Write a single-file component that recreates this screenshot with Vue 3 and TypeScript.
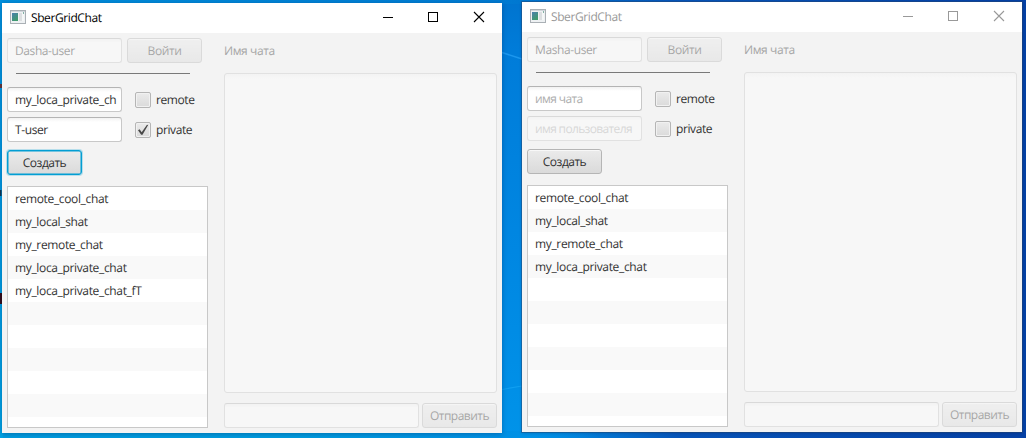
<script setup lang="ts">
interface ChatWindow {
  id: string
  active: boolean
  user: string
  chatName: string
  chatUser: string
  remote: boolean
  isPrivate: boolean
  chats: string[]
}

const windows: ChatWindow[] = [
  {
    id: 'dasha',
    active: true,
    user: 'Dasha-user',
    chatName: 'my_loca_private_ch',
    chatUser: 'T-user',
    remote: false,
    isPrivate: true,
    chats: ['remote_cool_chat', 'my_local_shat', 'my_remote_chat', 'my_loca_private_chat', 'my_loca_private_chat_fT'],
  },
  {
    id: 'masha',
    active: false,
    user: 'Masha-user',
    chatName: '',
    chatUser: '',
    remote: false,
    isPrivate: false,
    chats: ['remote_cool_chat', 'my_local_shat', 'my_remote_chat', 'my_loca_private_chat'],
  },
]

const rowCount = 11
</script>

<template>
  <main class="desktop">
    <svg class="wallpaper" width="1026" height="438" viewBox="0 0 1026 438">
      <path d="M502 52.500L522 59" stroke="#1c97ee" stroke-width="1.500" />
      <path d="M502 389.500L522 386" stroke="#109ff0" stroke-width="1.200" />
      <rect x="0" y="84" width="2" height="4" fill="#653638" />
      <rect x="0" y="190" width="1.500" height="6" fill="#12344c" />
      <rect x="0" y="293" width="2" height="11" fill="#350c18" />
    </svg>
    <section v-for="w in windows" :key="w.id" class="window" :class="{ inactive: !w.active }">
      <header class="titlebar">
        <svg class="app-icon" width="16" height="14" viewBox="0 0 16 14">
          <defs>
            <linearGradient :id="'pane-' + w.id" x1="0" y1="0" x2="0.600" y2="1">
              <stop offset="0" stop-color="#4a7fae" />
              <stop offset="1" stop-color="#3f9b6c" />
            </linearGradient>
          </defs>
          <rect x="0.500" y="0.500" width="15" height="13" fill="#eef1f3" stroke="#aab0b5" />
          <rect x="1" y="1" width="14" height="1" fill="#cfd5da" />
          <rect x="2" y="3" width="6" height="8" :fill="`url(#pane-${w.id})`" />
          <rect x="9" y="3" width="3" height="8" fill="#dcdfe1" />
          <rect x="12" y="3" width="2" height="8" fill="#f5f7f7" />
          <rect x="13" y="2" width="1" height="2" fill="#83b1a5" />
        </svg>
        <span class="title">SberGridChat</span>
        <svg class="controls" width="138" height="30" viewBox="0 0 138 30" fill="none" shape-rendering="crispEdges">
          <path d="M19 14.500H29" stroke="currentColor" />
          <rect x="64.500" y="9.500" width="9" height="9" stroke="currentColor" />
          <path d="M110 9L120 19M120 9L110 19" stroke="currentColor" stroke-width="1.100" shape-rendering="auto" />
        </svg>
      </header>
      <div class="content">
        <aside class="side">
          <div class="login">
            <div class="field disabled"><span class="clip user">{{ w.user }}</span></div>
            <div class="button disabled"><span class="enter">Войти</span></div>
          </div>
          <div class="divider"></div>
          <div class="option">
            <div class="field">
              <span v-if="w.chatName" class="clip latin">{{ w.chatName }}</span>
              <span v-else class="clip prompt">имя чата</span>
            </div>
            <div class="check">
              <span class="box"></span>
              <span class="remote">remote</span>
            </div>
          </div>
          <div class="option">
            <div class="field" :class="{ disabled: !w.isPrivate }">
              <span v-if="w.chatUser" class="clip tuser">{{ w.chatUser }}</span>
              <span v-else class="clip prompt long">имя пользователя</span>
            </div>
            <div class="check">
              <span class="box">
                <svg v-if="w.isPrivate" width="12" height="12" viewBox="0 0 12 12">
                  <path d="M1 6.200L2.600 5.300L4.700 8.300L9.800 1L11.300 0.800L5.500 10.800H4.200Z" fill="#484848" />
                </svg>
              </span>
              <span class="private">private</span>
            </div>
          </div>
          <div class="button create" :class="{ focused: w.active }"><span>Создать</span></div>
          <ul class="list">
            <li v-for="n in rowCount" :key="n"><span class="latin">{{ w.chats[n - 1] }}</span></li>
          </ul>
        </aside>
        <div class="chat">
          <div class="chat-name"><span>Имя чата</span></div>
          <div class="messages"></div>
          <div class="send">
            <div class="field disabled"></div>
            <div class="button disabled"><span class="submit">Отправить</span></div>
          </div>
        </div>
      </div>
    </section>
  </main>
</template>

<style>
body {
  margin: 0;
  overflow: hidden;
}
</style>

<style scoped>
* {
  box-sizing: border-box;
}
.desktop {
  position: relative;
  display: flex;
  gap: 20px;
  align-items: flex-start;
  width: 1026px;
  height: 438px;
  padding: 3px 0 0 2px;
  overflow: hidden;
  font-family: "Open Sans", "Noto Sans", sans-serif;
  font-size: 12px;
  line-height: 16px;
  letter-spacing: -0.4px;
  text-rendering: geometricPrecision;
  color: #323232;
  white-space: nowrap;
  background:
    linear-gradient(180deg, #0091de, #00a2e4) 0 0 / 3px 100% no-repeat,
    linear-gradient(90deg, #008fdc, #007bd2 500px, transparent 540px) 0 0 / 100% 4px no-repeat,
    linear-gradient(90deg, #009bdf 0 300px, #0090e4 500px, transparent 600px) 0 431px / 100% 7px no-repeat,
    linear-gradient(90deg, transparent 0 530px, #0754b8 680px, #0541a5 1000px) 0 0 / 100% 100% no-repeat,
    linear-gradient(180deg, #0074cf 0, #007cd9 50px, #0087e2 250px, #0093e9 438px);
}
.wallpaper {
  position: absolute;
  inset: 0;
}
.window {
  position: relative;
  flex: none;
  width: 500px;
  height: 430px;
  background: #f3f3f3;
  box-shadow: 0 1px 5px rgba(0, 20, 60, 0.3);
}
.window.inactive {
  margin-top: -1px;
  box-shadow: 0 0 0 1px rgba(40, 70, 110, 0.45), 0 1px 3px rgba(0, 20, 60, 0.25);
}
.titlebar {
  display: flex;
  align-items: center;
  height: 30px;
  padding-left: 8px;
  background: #fff;
  color: #000;
}
.inactive .titlebar {
  color: #999;
}
.app-icon {
  flex: none;
  margin-top: -2px;
}
.title {
  flex: 1;
  margin-left: 5px;
}
.controls {
  flex: none;
}
.content {
  display: flex;
  gap: 16px;
  height: 400px;
  padding: 5px;
}
.side {
  display: flex;
  flex-direction: column;
  width: 201px;
}
.login {
  display: flex;
  gap: 5px;
}
.field {
  flex: none;
  display: flex;
  align-items: center;
  width: 115px;
  height: 25px;
  padding: 1px 6px 0 7px;
  border: 1px solid #c8c8c8;
  border-top-color: #b4b4b4;
  border-radius: 3px;
  background: linear-gradient(#f2f2f2, #fff 4px);
}
.clip {
  display: block;
  width: 100%;
}
.button {
  flex: none;
  display: flex;
  align-items: center;
  justify-content: center;
  width: 75px;
  height: 25px;
  padding-top: 1px;
  border: 1px solid #b5b5b5;
  border-radius: 3px;
  background: linear-gradient(#ebebeb, #dadada);
  box-shadow: inset 0 1px 0 #f8f8f8;
}
.submit {
  letter-spacing: -0.5px;
}
.disabled {
  opacity: 0.4;
}
.divider {
  flex: none;
  width: 174px;
  height: 1px;
  margin: 10px 0 13px 9px;
  background: #797979;
}
.option {
  display: flex;
  gap: 13px;
  margin-bottom: 5px;
}
.check {
  display: flex;
  align-items: center;
  gap: 5px;
}
.box {
  display: flex;
  align-items: center;
  justify-content: center;
  width: 16px;
  height: 16px;
  border: 1px solid #b5b5b5;
  border-radius: 2px;
  background: linear-gradient(#ebebeb, #dadada);
  box-shadow: inset 0 0 0 1px #f1f1f1;
}
.box svg {
  flex: none;
}
.latin {
  letter-spacing: -0.35px;
}
.prompt {
  color: #aeaeae;
  letter-spacing: -0.6px;
}
.long {
  letter-spacing: -0.65px;
}
.create {
  margin: 3px 0 11px;
  letter-spacing: -0.5px;
}
.create.focused {
  border-color: #039ed3;
  box-shadow: 0 0 0 1px rgba(3, 158, 211, 0.25), inset 0 0 0 0.500px #039ed3;
}
.list {
  flex: 1;
  min-height: 0;
  margin: 0;
  padding: 0;
  overflow: hidden;
  list-style: none;
  border: 1px solid #c8c8c8;
  background: #fff;
}
.list li {
  height: 23px;
  padding: 4px 7px 3px;
}
.list li:nth-child(even) {
  background: #f9f9f9;
}
.chat {
  width: 273px;
}
.chat-name {
  display: flex;
  align-items: center;
  height: 25px;
  padding-top: 1px;
  color: #a6a6a6;
}
.messages {
  height: 320px;
  margin: 10px 0;
  border: 1px solid #e1e1e1;
  border-radius: 3px;
  background: linear-gradient(#f3f3f3, #f7f7f7 5px);
}
.send {
  display: flex;
  gap: 3px;
}
.send .field {
  width: 195px;
}
</style>
